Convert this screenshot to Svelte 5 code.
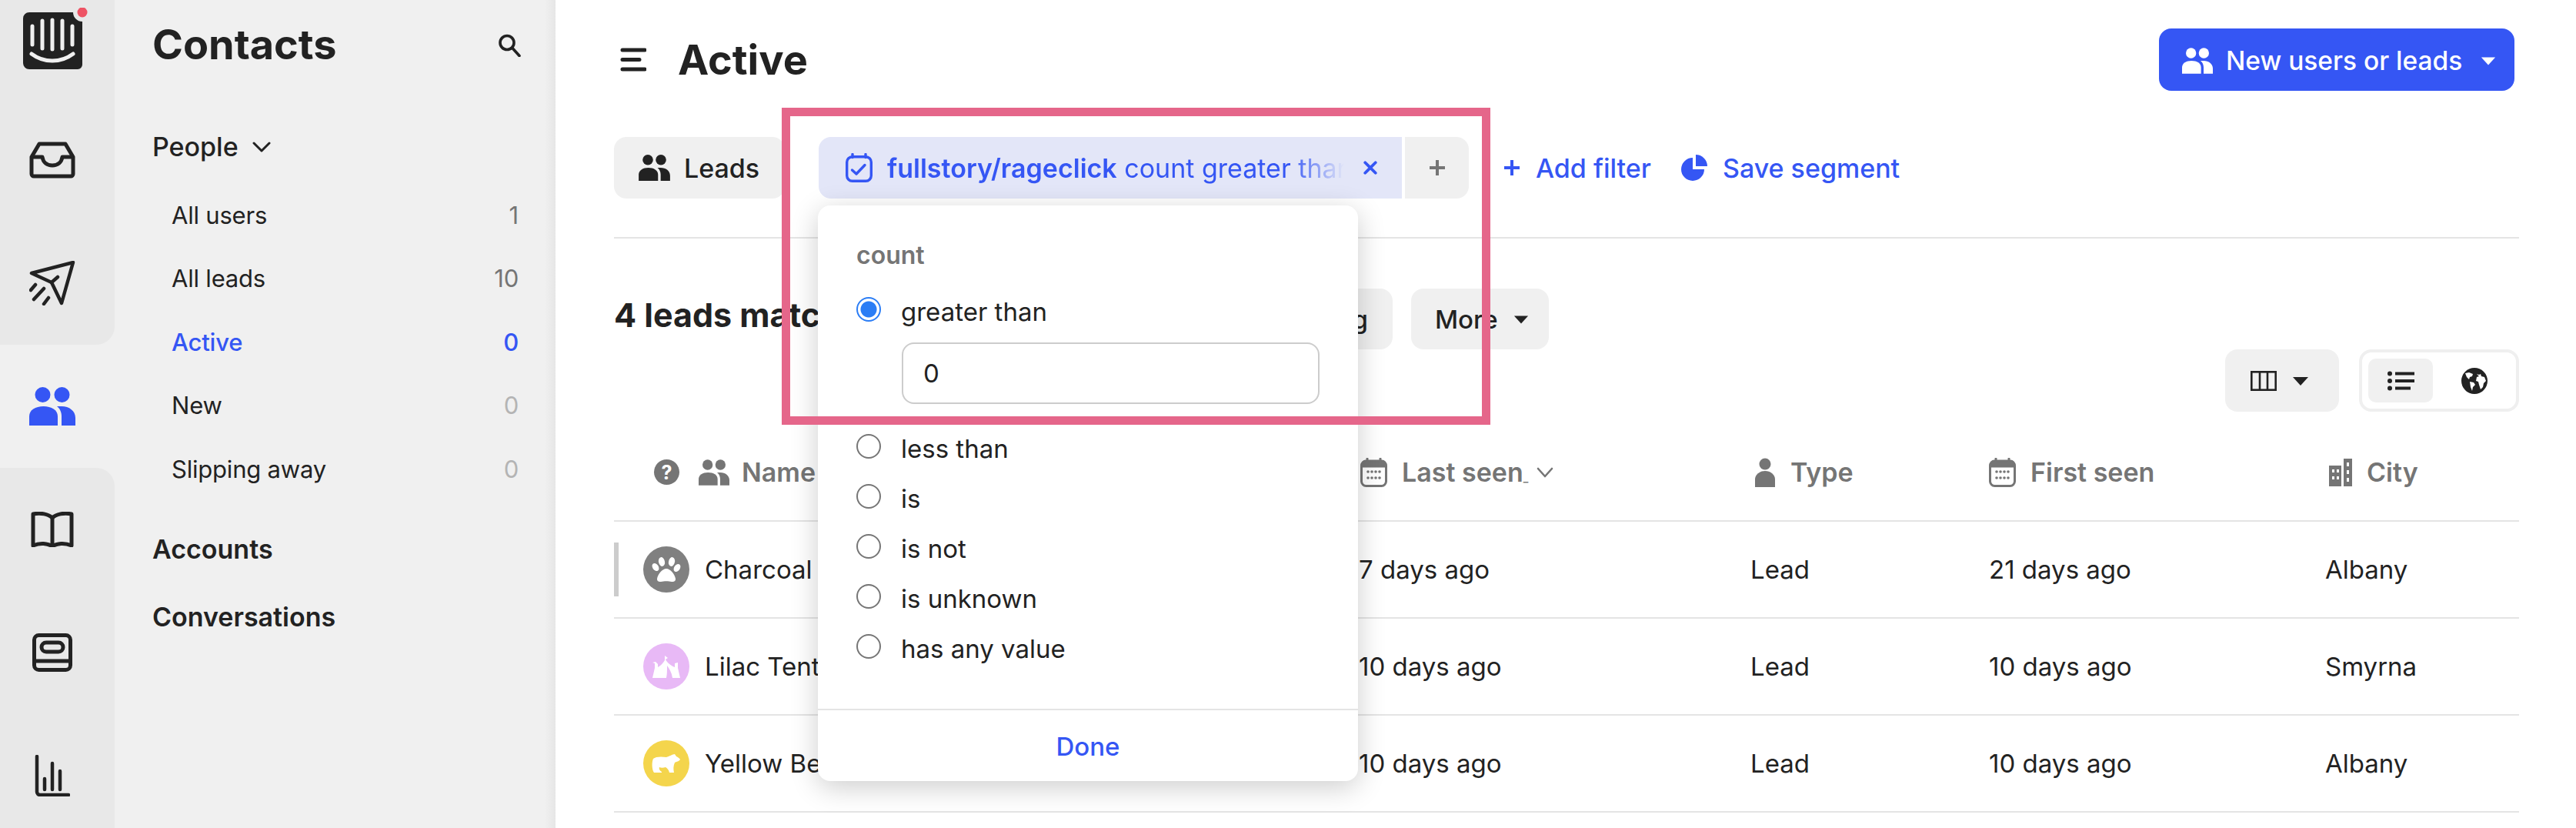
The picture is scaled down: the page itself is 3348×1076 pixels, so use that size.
<script>
  const people = [
    { label: 'All users', count: 1 },
    { label: 'All leads', count: 10 },
    { label: 'Active', count: 0, active: true },
    { label: 'New', count: 0, faded: true },
    { label: 'Slipping away', count: 0, faded: true }
  ];

  const options = ['less than', 'is', 'is not', 'is unknown', 'has any value'];

  const rows = [
    { name: 'Charcoal Paw', avatar: 'paw', color: '#808080', last: '7 days ago', first: '21 days ago', city: 'Albany', bar: true },
    { name: 'Lilac Tent', avatar: 'tent', color: '#e8b9f6', last: '10 days ago', first: '10 days ago', city: 'Smyrna' },
    { name: 'Yellow Bear', avatar: 'bear', color: '#f4d54c', last: '10 days ago', first: '10 days ago', city: 'Albany' }
  ];
</script>

{#snippet peopleIcon(cls)}
  <svg class={cls} viewBox="0 0 60 50" fill="currentColor">
    <circle cx="17.500" cy="10" r="10" />
    <circle cx="42.500" cy="10" r="10" />
    <path d="M0 50V38C0 30 8 25 18.500 25S37 30 37 38v12z" />
    <path d="M36 25h6c10 0 18 6 18 15v10H42V38c0-5-2-10-6-13z" />
  </svg>
{/snippet}

{#snippet calendar(cls)}
  <svg class={cls} viewBox="0 0 35 38" fill="none" stroke="currentColor" stroke-width="3">
    <rect x="1.5" y="4.5" width="32" height="32" rx="6" />
    <path d="M2 11V9a5 5 0 0 1 5-5h21a5 5 0 0 1 5 5v2z" fill="currentColor" />
    <path d="M9 1v5M26 1v5" stroke-linecap="round" />
    <g fill="currentColor" stroke="none">
      <circle cx="10" cy="18" r="1.8" /><circle cx="15" cy="18" r="1.8" /><circle cx="20" cy="18" r="1.8" /><circle cx="25" cy="18" r="1.8" />
      <circle cx="10" cy="26" r="1.8" /><circle cx="15" cy="26" r="1.8" /><circle cx="20" cy="26" r="1.8" /><circle cx="25" cy="26" r="1.8" />
    </g>
  </svg>
{/snippet}

{#snippet caret(cls)}
  <svg class={cls} viewBox="0 0 22 12" fill="currentColor"><path d="M1 1h20L11 12z" /></svg>
{/snippet}

<div class="app">
  <nav class="rail">
    <div class="rail-top">
      <div class="logo-cell">
        <svg class="logo" viewBox="0 0 84 80">
          <path d="M8 6h57a12 12 0 0 0 12 12v56a6 6 0 0 1-6 6H8a8 8 0 0 1-8-8V14a8 8 0 0 1 8-8z" fill="#222" />
          <g stroke="#f0f0f0" stroke-width="5" stroke-linecap="round">
            <path d="M12 24v24M25 17v36M38 16v38M51 17v36M64 24v24" />
            <path d="M11 60c16 12 38 12 54 0" fill="none" />
          </g>
          <circle cx="77" cy="6" r="6.5" fill="#ee5364" />
        </svg>
      </div>
      <div class="rail-cell">
        <svg class="ic-inbox" viewBox="0 0 60 48" fill="none" stroke="#222" stroke-width="5" stroke-linejoin="round">
          <path d="M3 20 13 3h34l10 17v22a3 3 0 0 1-3 3H6a3 3 0 0 1-3-3z" />
          <path d="M3 20h14c1 7 6 11 13 11s12-4 13-11h14" />
        </svg>
      </div>
      <div class="rail-cell">
        <svg class="ic-plane" viewBox="0 0 60 58" fill="none" stroke="#222" stroke-width="4.5" stroke-linejoin="round" stroke-linecap="round">
          <path d="M3 16 57 2l-15 53-13-27z" />
          <path d="m29 28 8-7M2 38l6-7M6 50l13-14M19 56l6-8" />
        </svg>
      </div>
    </div>
    <div class="rail-cell rail-active">{@render peopleIcon('ic-people')}</div>
    <div class="rail-bottom">
      <div class="rail-cell">
        <svg class="ic-book" viewBox="0 0 56 46" fill="none" stroke="#222" stroke-width="5" stroke-linejoin="round">
          <path d="M28 8C23 3 13 1 3 3v41c9-4 19-3 25 1 6-4 16-5 25-1V3C43 1 33 3 28 8z" />
          <path d="M28 8v37" />
        </svg>
      </div>
      <div class="rail-cell">
        <svg class="ic-report" viewBox="0 0 52 50" fill="none" stroke="#222" stroke-width="5">
          <rect x="2.5" y="2.5" width="47" height="45" rx="6" />
          <rect x="12" y="12" width="28" height="12" rx="6" />
          <path d="M3 36h46" />
        </svg>
      </div>
      <div class="rail-cell">
        <svg class="ic-chart" viewBox="0 0 46 54" fill="none" stroke="#222" stroke-width="4.5" stroke-linecap="round">
          <path d="M3 2v46a4 4 0 0 0 4 4h37" />
          <path d="M13 31v14M23 11v34M33 21v24" />
        </svg>
      </div>
    </div>
  </nav>

  <aside class="sidebar">
    <div class="side-head">
      <h1>Contacts</h1>
      <svg class="ic-search" viewBox="0 0 30 30" fill="none" stroke="#222" stroke-width="3.6" stroke-linecap="round">
        <circle cx="12" cy="11.5" r="9" /><path d="m19 18.500 9 10" />
      </svg>
    </div>
    <div class="side-title people-title">
      People
      <svg class="ic-chev" viewBox="0 0 24 14" fill="none" stroke="#222" stroke-width="3" stroke-linecap="round" stroke-linejoin="round"><path d="m2 2 10 10L22 2" /></svg>
    </div>
    <ul class="side-list">
      {#each people as item}
        <li class:active={item.active}>
          <span>{item.label}</span>
          <span class="count" class:faded={item.faded}>{item.count}</span>
        </li>
      {/each}
    </ul>
    <div class="side-title accounts">Accounts</div>
    <div class="side-title conversations">Conversations</div>
  </aside>

  <main class="main">
    <header class="top">
      <div class="top-left">
        <svg class="ic-menu" viewBox="0 0 34 31" fill="none" stroke="#222" stroke-width="5" stroke-linecap="round"><path d="M3 3h29M3 15.500h22M3 28h29" /></svg>
        <h2>Active</h2>
      </div>
      <button class="primary">
        {@render peopleIcon('ic-btn-people')}
        New users or leads
        {@render caret('ic-btn-caret')}
      </button>
    </header>

    <div class="filters">
      <div class="pill leads-pill">{@render peopleIcon('ic-leads')}Leads</div>
      <div class="chip">
        <svg class="ic-chip-cal" viewBox="0 0 35 38" fill="none" stroke="currentColor" stroke-width="3.400">
          <rect x="1.700" y="4.700" width="31.600" height="31.600" rx="7" />
          <path d="M9 1.500v4M26 1.500v4" stroke-linecap="round" />
          <path d="m8.500 22 5.500 5 11-11.500" stroke-linecap="round" stroke-linejoin="round" />
        </svg>
        <span class="chip-text"><b>fullstory/rageclick</b> count greater than</span>
        <svg class="ic-x" viewBox="0 0 16 16" fill="none" stroke="currentColor" stroke-width="3.400" stroke-linecap="round"><path d="m2 2 12 12M14 2 2 14" /></svg>
      </div>
      <div class="plus-pill">
        <svg class="ic-plus" viewBox="0 0 18 18" fill="none" stroke="currentColor" stroke-width="3.600"><path d="M9 0v18M0 9h18" /></svg>
      </div>
      <a class="link add-filter" href="#top">
        <svg class="ic-plus" viewBox="0 0 18 18" fill="none" stroke="currentColor" stroke-width="3.600"><path d="M9 0v18M0 9h18" /></svg>
        Add filter
      </a>
      <a class="link save-segment" href="#top">
        <svg class="ic-pie" viewBox="0 0 34 34" fill="currentColor">
          <path d="M15 4a15 15 0 1 0 15 15H15z" /><path d="M19 0a15 15 0 0 1 15 15H19z" />
        </svg>
        Save segment
      </a>
    </div>

    <div class="rule"></div>

    <div class="summary">
      <div class="match">4 leads match</div>
      <div class="pill tag-pill">Add tag</div>
      <div class="pill more-pill">More {@render caret('ic-more-caret')}</div>
    </div>

    <div class="views">
      <div class="pill cols-pill">
        <svg class="ic-cols" viewBox="0 0 34 26" fill="none" stroke="#222" stroke-width="2.600"><rect x="1.300" y="1.300" width="31.400" height="23.400" /><path d="M12 1v24M22 1v24" /></svg>
        {@render caret('ic-cols-caret')}
      </div>
      <div class="toggle">
        <div class="toggle-on">
          <svg class="ic-list" viewBox="0 0 35 26" fill="#222"><circle cx="3" cy="3.500" r="3" /><circle cx="3" cy="13" r="3" /><circle cx="3" cy="22.500" r="3" /><rect x="10" y="1.500" width="25" height="4" /><rect x="10" y="11" width="25" height="4" /><rect x="10" y="20.500" width="20" height="4" /></svg>
        </div>
        <div class="toggle-off">
          <svg class="ic-globe" viewBox="0 0 34 34">
            <circle cx="17" cy="17" r="17" fill="#222" />
            <path d="M5 7l5-1 5 2-1 3-3 1-1 3-3-3zM11 18l5 1 2 3-3 3-1 5-2-5zM20 8l3 1 2-1 1 3 4 1 2 5-3 3-1 5-3 3-2-6-1-4-3-1 1-5 3-1z" fill="#fff" />
          </svg>
        </div>
      </div>
    </div>

    <div class="table">
      <div class="row head">
        <div class="th name-th">
          <span class="help">?</span>
          {@render peopleIcon('ic-th-people')}
          Name
        </div>
        <div class="th last-th">
          {@render calendar('ic-th-cal')}
          <span>Last seen<span class="tiny">_</span></span>
          <svg class="ic-th-chev" viewBox="0 0 22 14" fill="none" stroke="currentColor" stroke-width="2.600" stroke-linecap="round" stroke-linejoin="round"><path d="m2 2 9 10 9-10" /></svg>
        </div>
        <div class="th type-th">
          <svg class="ic-th-person" viewBox="0 0 28 38" fill="currentColor"><circle cx="14" cy="8" r="7.500" /><path d="M1 38V28a13 11 0 0 1 26 0v10z" /></svg>
          Type
        </div>
        <div class="th">
          {@render calendar('ic-th-cal')}
          First seen
        </div>
        <div class="th city-th">
          <svg class="ic-th-city" viewBox="0 0 30 36" fill="currentColor"><path d="M19 0h11v36H19zM0 9h16v27H0z" /><path d="M4 14h3v4H4zM10 14h3v4h-3zM4 23h3v4H4zM10 23h3v4h-3zM23 5h3v5h-3zM23 15h3v5h-3zM23 25h3v5h-3z" fill="#fff" /></svg>
          City
        </div>
      </div>
      {#each rows as row}
        <div class="row">
          {#if row.bar}<span class="row-bar"></span>{/if}
          <div class="td name-td">
            <span class="avatar" style="background: {row.color}">
              {#if row.avatar === 'paw'}
                <svg viewBox="0 0 60 60" fill="#fff">
                  <ellipse cx="16" cy="27" rx="3.800" ry="5.500" transform="rotate(-35 16 27)" />
                  <ellipse cx="24" cy="20" rx="4" ry="6" transform="rotate(-12 24 20)" />
                  <ellipse cx="37" cy="20" rx="4" ry="6" transform="rotate(12 37 20)" />
                  <ellipse cx="44" cy="28" rx="3.800" ry="5.500" transform="rotate(35 44 28)" />
                  <path d="M30 29c5 0 11 7 12 13 .4 3-2 4.500-5 4-4-1-10-1-14 0-3 .5-5.400-1-5-4 1-6 7-13 12-13z" />
                </svg>
              {:else if row.avatar === 'tent'}
                <svg viewBox="0 0 60 60" fill="#fff"><path d="M12 45l3-13v-6l-3-1 4-1 3 3v4c4-2 7-6 9-9v-6l4 3-3 2c2 4 7 8 12 10v-5l4-1v7l3 13H38c-1-7-4-12-7-16 0 6 0 11-1 16z" /></svg>
              {:else}
                <svg viewBox="0 0 60 60" fill="#fff"><path d="M13 24c3-3 11-3 17-2 4-1 8-4 11-4l2 3c2 1 4 2 5 4-1 2-5 3-7 4-2 4-2 9-1 13h-6c-1-4-3-6-5-7-3 1-6 1-8 0-1 2 1 5 3 6v1h-6c-3-2-4-5-4-9l1 4 3 5h-4c-3-4-3-14-1-18z" /></svg>
              {/if}
            </span>
            {row.name}
          </div>
          <div class="td">{row.last}</div>
          <div class="td">Lead</div>
          <div class="td">{row.first}</div>
          <div class="td">{row.city}</div>
        </div>
      {/each}
    </div>
  </main>

  <div class="popover">
    <div class="pop-body">
      <div class="pop-label">count</div>
      <label class="option">
        <input type="radio" name="cmp" checked />
        greater than
      </label>
      <input class="value" type="text" value="0" />
      <div class="rest">
        {#each options as option}
          <label class="option">
            <input type="radio" name="cmp" />
            {option}
          </label>
        {/each}
      </div>
    </div>
    <div class="pop-foot">Done</div>
  </div>

  <div class="highlight"></div>
</div>

<style>
  :global(body) {
    margin: 0;
    background: #fff;
  }

  .app {
    position: relative;
    display: flex;
    width: 3348px;
    height: 1076px;
    overflow: hidden;
    font-family: Inter, "Liberation Sans", sans-serif;
    font-size: 33px;
    color: #222;
    background: #fff;
  }

  /* left rail */
  .rail {
    flex: none;
    width: 149px;
    background: #f0f0f0;
  }

  .rail-top {
    height: 448px;
    background: #e8e8e8;
    border-bottom-right-radius: 24px;
  }

  .rail-bottom {
    height: 468px;
    background: #e8e8e8;
    border-top-right-radius: 24px;
  }

  .rail-cell {
    display: flex;
    height: 160px;
    box-sizing: border-box;
    padding-right: 13px;
    align-items: center;
    justify-content: center;
  }

  .logo-cell {
    height: 128px;
    padding: 10px 0 0 30px;
    box-sizing: border-box;
  }

  .logo { display: block; width: 84px; height: 80px; }
  .ic-inbox { width: 60px; height: 48px; }
  .ic-plane { width: 60px; height: 58px; }
  .rail-active { color: #3556f4; }
  .ic-book { width: 56px; height: 46px; }
  .ic-report { width: 52px; height: 50px; }
  .ic-chart { width: 46px; height: 54px; }

  :global(.ic-people) { width: 60px; height: 50px; }

  /* contacts sidebar */
  .sidebar {
    flex: none;
    width: 573px;
    box-sizing: border-box;
    padding: 0 48px 0 49px;
    background: linear-gradient(to right, #f0f0f0 calc(100% - 14px), #e6e6e6);
  }

  .side-head {
    display: flex;
    height: 114px;
    align-items: center;
    justify-content: space-between;
  }

  h1 {
    margin: 0;
    font-size: 54px;
    font-weight: 700;
  }

  .ic-search { width: 30px; height: 30px; margin-top: 4px; margin-right: -3px; }

  .side-title {
    font-size: 34px;
    font-weight: 600;
    line-height: 44px;
  }

  .people-title {
    display: flex;
    align-items: center;
    gap: 18px;
    margin-top: 55px;
    font-weight: 500;
  }

  .ic-chev { width: 24px; height: 14px; }

  .side-list {
    margin: 25px 0 0;
    padding: 0;
    list-style: none;
    font-size: 31px;
    letter-spacing: -0.2px;
  }

  .side-list li {
    display: flex;
    height: 82.500px;
    align-items: center;
    justify-content: space-between;
    padding-left: 25px;
  }

  .side-list li.active { color: #3556f4; font-weight: 500; }
  .count { color: #757575; }
  .active .count { color: #3556f4; }
  .count.faded { color: #b4b4b4; }

  .accounts { margin-top: 41px; }
  .conversations { margin-top: 44px; }

  /* main column */
  .main {
    flex: 1;
    min-width: 0;
    padding: 37px 74px 0 76px;
  }

  .top {
    display: flex;
    height: 81px;
    align-items: center;
    justify-content: space-between;
    padding-right: 6px;
  }

  .top-left {
    display: flex;
    align-items: center;
    gap: 41px;
  }

  .ic-menu { width: 34px; height: 31px; margin-left: 8px; }

  h2 {
    margin: 0;
    font-size: 54px;
    font-weight: 700;
  }

  .primary {
    display: flex;
    width: 462px;
    height: 81px;
    align-items: center;
    padding: 2px 0 0 30px;
    border: 0;
    border-radius: 16px;
    background: #3556f4;
    color: #fff;
    font: 500 33.500px Inter, "Liberation Sans", sans-serif;
  }

  :global(.ic-btn-people) { width: 40px; height: 34px; margin-right: 17px; }
  :global(.ic-btn-caret) { width: 20px; height: 12px; margin-left: 24px; }

  .filters {
    display: flex;
    height: 80px;
    align-items: center;
    margin-top: 60px;
  }

  .pill {
    display: flex;
    align-items: center;
    box-sizing: border-box;
    background: #f0f0f0;
    border-radius: 16px;
  }

  .leads-pill {
    width: 222px;
    height: 80px;
    flex: none;
    padding-left: 32px;
    margin-right: 44px;
    font-size: 34px;
    font-weight: 500;
  }

  :global(.ic-leads) { width: 41px; height: 34px; margin-right: 18px; }

  .chip {
    position: relative;
    display: flex;
    flex: none;
    width: 758px;
    height: 80px;
    align-items: center;
    box-sizing: border-box;
    padding-left: 35px;
    background: #e3e6f8;
    border-radius: 16px 0 0 16px;
    color: #3556f4;
    font-size: 34px;
  }

  .ic-chip-cal { width: 35px; height: 38px; flex: none; margin-right: 19px; }

  .chip-text {
    width: 594px;
    overflow: hidden;
    white-space: nowrap;
    -webkit-mask-image: linear-gradient(to right, #000 88%, transparent);
    mask-image: linear-gradient(to right, #000 88%, transparent);
  }

  .chip-text b { font-weight: 600; }

  .ic-x { width: 18px; height: 18px; flex: none; margin-left: 25px; }

  .plus-pill {
    display: flex;
    flex: none;
    width: 83px;
    height: 80px;
    align-items: center;
    justify-content: center;
    margin-left: 4px;
    background: #f0f0f0;
    border-radius: 0 16px 16px 0;
    color: #757575;
  }

  .ic-plus { width: 20px; height: 20px; flex: none; }

  .link {
    display: flex;
    align-items: center;
    color: #3556f4;
    font-size: 34px;
    font-weight: 500;
    text-decoration: none;
  }

  .add-filter { gap: 21px; margin-left: 46px; }
  .save-segment { gap: 20px; margin-left: 39px; }
  .ic-pie { width: 34px; height: 34px; }

  .rule {
    height: 2px;
    margin-top: 50px;
    background: #e4e4e4;
  }

  .summary {
    display: flex;
    height: 79px;
    align-items: center;
    margin-top: 65px;
  }

  .match {
    flex: none;
    width: 800px;
    font-size: 43px;
    font-weight: 700;
    margin-top: -12px;
    white-space: nowrap;
  }

  .tag-pill {
    width: 212px;
    height: 79px;
    justify-content: flex-end;
    padding-right: 32px;
    font-weight: 500;
  }

  .more-pill {
    width: 179px;
    height: 79px;
    margin-left: 24px;
    padding-left: 31px;
    gap: 20px;
    font-weight: 500;
  }

  :global(.ic-more-caret) { width: 20px; height: 12px; }

  .views {
    display: flex;
    height: 81px;
    justify-content: flex-end;
    gap: 26px;
  }

  .cols-pill {
    width: 148px;
    height: 81px;
    padding-left: 33px;
    gap: 20px;
  }

  .ic-cols { width: 34px; height: 26px; }
  :global(.ic-cols-caret) { width: 22px; height: 12px; }

  .toggle {
    display: flex;
    width: 208px;
    height: 81px;
    box-sizing: border-box;
    padding: 8px;
    border: 4px solid #efefef;
    border-radius: 16px;
  }

  .toggle-on {
    display: flex;
    width: 84px;
    align-items: center;
    justify-content: center;
    background: #f0f0f0;
    border-radius: 10px;
  }

  .toggle-off {
    display: flex;
    flex: 1;
    align-items: center;
    justify-content: center;
    padding-left: 8px;
  }

  .ic-list { width: 35px; height: 26px; }
  .ic-globe { width: 34px; height: 34px; }

  /* table */
  .row {
    position: relative;
    display: grid;
    grid-template-columns: 968px 509px 310px 437px 1fr;
    height: 124px;
    align-items: center;
    border-bottom: 2px solid #e4e4e4;
  }

  .row.head {
    height: 125px;
    padding-top: 16px;
  }

  .th {
    display: flex;
    align-items: center;
    gap: 19px;
    color: #757575;
    font-size: 34px;
    font-weight: 600;
  }

  .name-th { padding-left: 52px; }
  .last-th { padding-left: 2px; }
  .type-th { padding-left: 5px; }
  .city-th { padding-left: 5px; }

  .tiny { font-size: 14px; }

  .help {
    display: flex;
    width: 33px;
    height: 33px;
    align-items: center;
    justify-content: center;
    margin-right: 6px;
    border-radius: 50%;
    background: #757575;
    color: #fff;
    font-size: 25px;
    font-weight: 700;
  }

  :global(.ic-th-people) { width: 40px; height: 34px; margin-right: -3px; }
  :global(.ic-th-cal) { width: 35px; height: 38px; }
  .ic-th-chev { width: 22px; height: 14px; margin-left: -8px; }
  .ic-th-person { width: 28px; height: 38px; }
  .ic-th-city { width: 30px; height: 36px; }

  .row-bar {
    position: absolute;
    left: 0;
    top: 27px;
    width: 6px;
    height: 70px;
    background: #ccc;
  }

  .td { white-space: nowrap; overflow: hidden; }

  .name-td {
    display: flex;
    align-items: center;
    gap: 20px;
    padding-left: 38px;
  }

  .avatar {
    display: flex;
    flex: none;
    width: 60px;
    height: 60px;
    align-items: center;
    justify-content: center;
    border-radius: 50%;
  }

  .avatar svg { width: 60px; height: 60px; }

  /* popover over the table */
  .popover {
    position: absolute;
    left: 1063px;
    top: 267px;
    width: 702px;
    height: 748px;
    display: flex;
    flex-direction: column;
    box-sizing: border-box;
    background: #fff;
    border-radius: 16px;
    box-shadow: 0 8px 36px rgba(0, 0, 0, 0.2);
  }

  .pop-body {
    flex: 1;
    padding: 44px 50px 0;
  }

  .pop-label {
    color: #757575;
    font-size: 32px;
    font-weight: 600;
    line-height: 42px;
  }

  .option {
    display: flex;
    height: 65px;
    align-items: center;
    gap: 26px;
    line-height: 65px;
  }

  .pop-label + .option { margin-top: 20px; }

  .option input {
    appearance: none;
    flex: none;
    width: 32px;
    height: 32px;
    margin: -8px 0 0;
    box-sizing: border-box;
    border: 2px solid #767676;
    border-radius: 50%;
    background: #fff;
  }

  .option input:checked {
    border-color: #2b7df5;
    background: radial-gradient(circle, #2b7df5 0 10px, #fff 11px);
  }

  .value {
    display: block;
    width: 543px;
    height: 80px;
    box-sizing: border-box;
    margin: 7px 0 0 59px;
    padding: 0 26px;
    border: 2px solid #ccc;
    border-radius: 16px;
    font: 400 33px Inter, "Liberation Sans", sans-serif;
    color: #222;
    outline: none;
  }

  .rest { margin-top: 26px; }

  .pop-foot {
    height: 94px;
    border-top: 2px solid #e4e4e4;
    box-sizing: border-box;
    line-height: 94px;
    text-align: center;
    color: #3556f4;
    font-weight: 500;
  }

  .highlight {
    position: absolute;
    left: 1016px;
    top: 140px;
    width: 921px;
    height: 412px;
    box-sizing: border-box;
    border: 11px solid #e5668a;
    pointer-events: none;
  }
</style>
